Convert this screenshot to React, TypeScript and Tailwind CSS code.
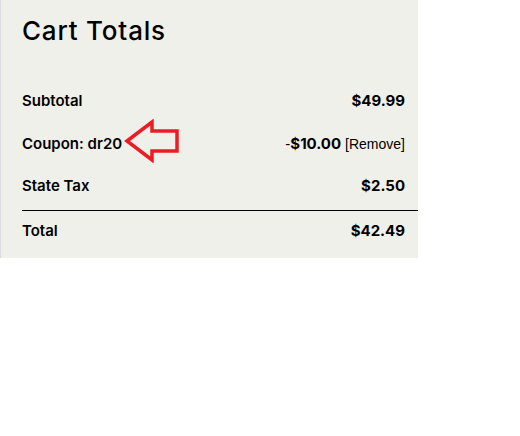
const rows = [
  { label: 'Subtotal', value: '$49.99' },
  { label: 'Coupon: dr20', value: '$10.00', coupon: true },
  { label: 'State Tax', value: '$2.50' },
];

function Arrow() {
  return (
    <svg className="absolute left-[123px] top-[119px]" width="58" height="44" viewBox="0 0 58 44">
      <polygon
        points="3,22 28,3 28,12 53,12 53,32 28,32 28,41"
        fill="none"
        stroke="#ec1c24"
        strokeWidth="3.5"
        strokeLinejoin="miter"
      />
    </svg>
  );
}

export default function App() {
  return (
    <div className="w-[520px] h-[436px] bg-white">
      <div className="relative w-[418px] h-[258px] bg-[#f0f0ea] border-l border-[#d9dce4] pl-[21px] font-['Inter',sans-serif] text-black">
        <h2 className="pt-[15px] h-[80px] text-[26px] leading-[32px] font-medium tracking-[0.8px]">Cart Totals</h2>
        {rows.map((row) => (
          <div key={row.label} className="flex h-[42.5px] items-center justify-between pr-[13px] text-[15px] font-semibold">
            <span>{row.label}</span>
            {row.coupon ? (
              <span className="flex items-baseline">
                <span className="font-['Liberation_Sans',sans-serif] font-normal">-</span>
                <span className="font-bold">{row.value}</span>
                <span className="ml-[4px] font-['Liberation_Sans',sans-serif] text-[14px] font-normal">[Remove]</span>
              </span>
            ) : (
              <span className="font-bold">{row.value}</span>
            )}
          </div>
        ))}
        <div className="mt-[2px] flex h-[42px] items-center justify-between border-t border-black pr-[13px] text-[15px] font-semibold">
          <span>Total</span>
          <span className="font-bold">$42.49</span>
        </div>
        <Arrow />
      </div>
    </div>
  );
}
